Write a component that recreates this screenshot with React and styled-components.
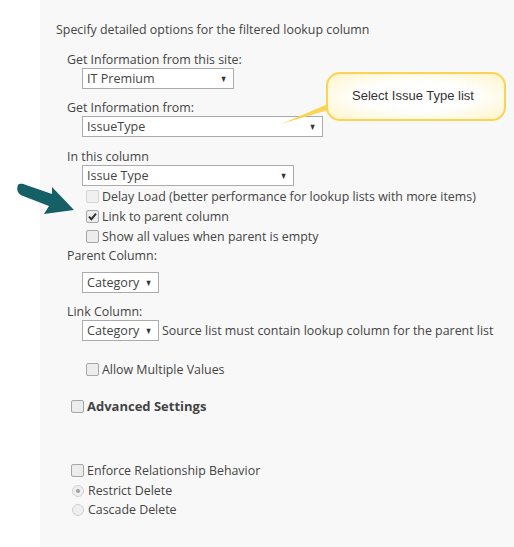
import styled, { createGlobalStyle } from "styled-components";

const Global = createGlobalStyle`
  html, body {
    margin: 0;
    padding: 0;
    background: #ffffff;
  }
  #root {
    width: 514px;
    height: 547px;
  }
`;

const Page = styled.div`
  position: relative;
  width: 514px;
  height: 547px;
  display: flex;
  overflow: hidden;
`;

const Gutter = styled.div`
  width: 40px;
  flex: none;
  background: #ffffff;
`;

const Panel = styled.div`
  flex: 1;
  background: #f8f8f8;
  padding: 22px 0 0 16px;
  font-family: "Open Sans", "Noto Sans", sans-serif;
  font-size: 12.4px;
  color: #444444;
`;

const Line = styled.div`
  height: 16px;
  line-height: 16px;
  white-space: nowrap;
  margin-top: ${(p) => p.$top || 0}px;
  padding-left: ${(p) => p.$indent || 0}px;
`;

const Row = styled.div`
  display: flex;
  align-items: center;
  gap: 3px;
  height: ${(p) => p.$h || 20}px;
  margin-top: ${(p) => p.$top || 0}px;
  padding-left: ${(p) => p.$indent || 0}px;
  white-space: nowrap;
  font-weight: ${(p) => (p.$bold ? 700 : 400)};
  font-size: ${(p) => (p.$bold ? 13 : 12.4)}px;
`;

const Select = styled.div`
  box-sizing: border-box;
  width: ${(p) => p.$w}px;
  height: 21px;
  margin-top: ${(p) => p.$top || 0}px;
  margin-left: 26px;
  border: 1px solid #ababab;
  background: #ffffff;
  display: flex;
  align-items: center;
  justify-content: space-between;
  padding: 0 5px 0 4px;
  font-size: 12.6px;
  color: #444444;
  flex: none;
`;

const Caret = styled.span`
  font-size: 9px;
  color: #333333;
  margin-left: 4px;
  transform: scaleX(0.8);
`;

const Box = styled.span`
  box-sizing: border-box;
  width: 13px;
  height: 13px;
  border: 1px solid ${(p) => (p.$disabled ? "#d4d4d4" : "#a6a6a6")};
  border-radius: 2px;
  background: ${(p) => (p.$disabled ? "#f0f0f0" : "#ececec")};
  display: inline-flex;
  align-items: center;
  justify-content: center;
  flex: none;
`;

const Radio = styled.span`
  box-sizing: border-box;
  width: 12px;
  height: 12px;
  margin: 0 1px;
  border: 1px solid #d0d0d0;
  border-radius: 50%;
  background: #eeeeee;
  display: inline-flex;
  align-items: center;
  justify-content: center;
  flex: none;
  &::after {
    content: "";
    width: 4px;
    height: 4px;
    border-radius: 50%;
    background: ${(p) => (p.$on ? "#a0a0a0" : "transparent")};
  }
`;

const Callout = styled.div`
  position: absolute;
  left: 326px;
  top: 72px;
  width: 180px;
  height: 49px;
  box-sizing: border-box;
  border: 2px solid #fbd454;
  border-radius: 14px;
  background: radial-gradient(ellipse at center, #ffffff 45%, #fff4c8 100%);
  display: flex;
  align-items: center;
  justify-content: center;
  padding: 0 6px 2px 0;
  font-family: "Liberation Sans", Arial, sans-serif;
  font-size: 13px;
  color: #333333;
`;

const Tail = styled.svg`
  position: absolute;
  left: 278px;
  top: 96px;
  overflow: visible;
`;

const Pointer = styled.svg`
  position: absolute;
  left: 14px;
  top: 180px;
`;

const Check = () => (
  <svg width="9" height="9" viewBox="0 0 9 9">
    <path d="M1 4.6 L3.4 7.2 L8 1.6" fill="none" stroke="#333" strokeWidth="2" />
  </svg>
);

const Choice = ({ children, checked, disabled, indent = 30, top, bold }) => (
  <Row $indent={indent} $top={top} $bold={bold}>
    <Box $disabled={disabled}>{checked && <Check />}</Box>
    <span>{children}</span>
  </Row>
);

const Dropdown = ({ w, top, children }) => (
  <Select $w={w} $top={top}>
    <span>{children}</span>
    <Caret>▼</Caret>
  </Select>
);

export default function App() {
  return (
    <Page>
      <Global />
      <Gutter />
      <Panel>
        <Line>Specify detailed options for the filtered lookup column</Line>
        <Line $top={14} $indent={11}>Get Information from this site:</Line>
        <Dropdown w={152}>IT Premium</Dropdown>
        <Line $top={11} $indent={11}>Get Information from:</Line>
        <Dropdown w={241}>IssueType</Dropdown>
        <Line $top={12} $indent={11}>In this column</Line>
        <Dropdown w={212}>Issue Type</Dropdown>
        <Choice disabled>Delay Load (better performance for lookup lists with more items)</Choice>
        <Choice checked>Link to parent column</Choice>
        <Choice>Show all values when parent is empty</Choice>
        <Line $top={2} $indent={11}>Parent Column:</Line>
        <Dropdown w={77} top={8}>Category</Dropdown>
        <Line $top={11} $indent={11}>Link Column:</Line>
        <Row $h={21}>
          <Dropdown w={77}>Category</Dropdown>
          <span>Source list must contain lookup column for the parent list</span>
        </Row>
        <Choice top={18}>Allow Multiple Values</Choice>
        <Choice top={17} indent={15} bold>Advanced Settings</Choice>
        <Choice top={44} indent={15}>Enforce Relationship Behavior</Choice>
        <Row $indent={15} $h={19} $top={1}>
          <Radio $on />
          <span>Restrict Delete</span>
        </Row>
        <Row $indent={15} $h={19}>
          <Radio />
          <span>Cascade Delete</span>
        </Row>
      </Panel>

      <Tail width="50" height="30">
        <path d="M3 28 L50 8 L50 14 Z" fill="#fbd454" />
      </Tail>
      <Callout>Select Issue Type list</Callout>

      <Pointer width="64" height="40" viewBox="0 0 64 40">
        <path
          d="M4 5 C6 3 9 4 12 5 L38 14 L38 7 L60 30 L30 34 L35 26 L9 16 C4 14 2 10 4 5 Z"
          fill="#155f66"
        />
      </Pointer>
    </Page>
  );
}
